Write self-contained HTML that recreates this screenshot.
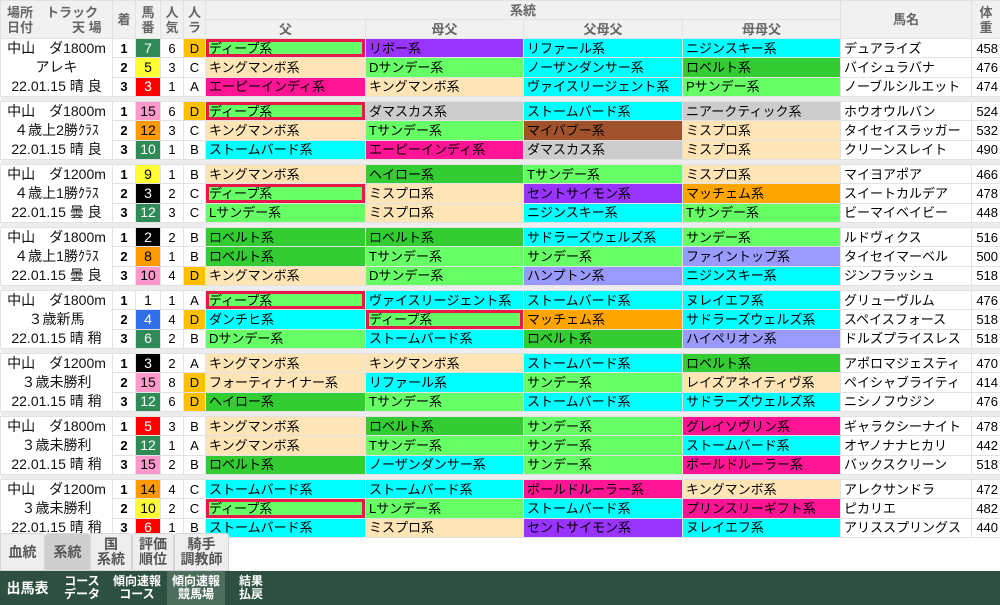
<!DOCTYPE html>
<html><head><meta charset="utf-8"><style>
*{margin:0;padding:0;box-sizing:border-box}
body{width:1000px;height:605px;overflow:hidden;background:#fff;font-family:"Liberation Sans","Noto Sans CJK JP",sans-serif;position:relative}
table{position:absolute;left:0;top:0;width:1000px;border-collapse:collapse;table-layout:fixed}
td,th{border:1px solid #e2e2e2;font-size:13px;white-space:nowrap;overflow:hidden;height:19px;line-height:17px;padding:0}
th{background:#f1f1f1;color:#666;font-weight:bold;font-size:13px;line-height:15px}
td.v{text-align:center;font-size:14px;line-height:19px;vertical-align:middle;color:#111}
td.a{text-align:center;font-weight:bold}
td.n{text-align:center;font-size:14px}
td.k{text-align:center}
td.D{background:#ffc000}
td.t{padding-left:3px}
td.w{text-align:right;padding-right:2px}
.g{background:#66ff66}.p{background:#ffe4b5}.c{background:#00ffff}.d{background:#33cc33}.m{background:#ff1493}.u{background:#9933ff}.s{background:#cccccc}.b{background:#a0522d}.o{background:#ffa500}.l{background:#9999ff}
.r{box-shadow:inset 0 0 0 3px #e8194a}
.f1{background:#fff}.f2{background:#000;color:#fff}.f3{background:#ff0000;color:#fff}.f4{background:#2f6fe8;color:#fff}.f5{background:#ffff33}.f6{background:#2e8b57;color:#fff}.f7{background:#ff9900}.f8{background:#ff99cc}
tr.gap td{height:5px;background:#ededed;border:none}
.tabs{position:absolute;left:0;top:533px;height:38px;display:flex}
.tab{height:38px;border:1px solid #d5d5d5;background:#eeeeee;color:#555;font-weight:bold;font-size:14px;display:flex;align-items:center;justify-content:center;text-align:center;line-height:15px;border-radius:3px 3px 0 0}
.bar{position:absolute;left:0;top:571px;width:1000px;height:34px;background:#2e5040;color:#fff;font-weight:bold}
.bi{position:absolute;top:0;height:34px;display:flex;align-items:center;justify-content:center;text-align:center;font-size:12px;line-height:13px}
</style></head><body>
<table>
<colgroup><col style="width:112px"><col style="width:23px"><col style="width:25px"><col style="width:23px"><col style="width:22px"><col style="width:160px"><col style="width:158px"><col style="width:159px"><col style="width:158px"><col style="width:131px"><col style="width:29px"></colgroup>
<tr><th rowspan="2" style="height:38px;text-align:left;padding-left:6px">場所　トラック<br>日付　　　天 場</th><th rowspan="2">着</th><th rowspan="2">馬<br>番</th><th rowspan="2">人<br>気</th><th rowspan="2">人<br>ラ</th><th colspan="4">系統</th><th rowspan="2">馬名</th><th rowspan="2">体<br>重</th></tr>
<tr><th>父</th><th>母父</th><th>父母父</th><th>母母父</th></tr>

<tr><td class="v" rowspan="3">中山　ダ1800m<br>アレキ<br>22.01.15 晴 良</td><td class="a">1</td><td class="n f6">7</td><td class="k">6</td><td class="k D">D</td><td class="t g r">ディープ系</td><td class="t u">リボー系</td><td class="t c">リファール系</td><td class="t c">ニジンスキー系</td><td class="t">デュアライズ</td><td class="w">458</td></tr>
<tr><td class="a">2</td><td class="n f5">5</td><td class="k">3</td><td class="k">C</td><td class="t p">キングマンボ系</td><td class="t g">Dサンデー系</td><td class="t c">ノーザンダンサー系</td><td class="t d">ロベルト系</td><td class="t">バイシュラバナ</td><td class="w">476</td></tr>
<tr><td class="a">3</td><td class="n f3">3</td><td class="k">1</td><td class="k">A</td><td class="t m">エーピーインディ系</td><td class="t p">キングマンボ系</td><td class="t c">ヴァイスリージェント系</td><td class="t g">Pサンデー系</td><td class="t">ノーブルシルエット</td><td class="w">474</td></tr>
<tr class="gap"><td colspan="11"></td></tr>

<tr><td class="v" rowspan="3">中山　ダ1800m<br>４歳上2勝ｸﾗｽ<br>22.01.15 晴 良</td><td class="a">1</td><td class="n f8">15</td><td class="k">6</td><td class="k D">D</td><td class="t g r">ディープ系</td><td class="t s">ダマスカス系</td><td class="t c">ストームバード系</td><td class="t s">ニアークティック系</td><td class="t">ホウオウルバン</td><td class="w">524</td></tr>
<tr><td class="a">2</td><td class="n f7">12</td><td class="k">3</td><td class="k">C</td><td class="t p">キングマンボ系</td><td class="t g">Tサンデー系</td><td class="t b">マイバブー系</td><td class="t p">ミスプロ系</td><td class="t">タイセイスラッガー</td><td class="w">532</td></tr>
<tr><td class="a">3</td><td class="n f6">10</td><td class="k">1</td><td class="k">B</td><td class="t c">ストームバード系</td><td class="t m">エーピーインディ系</td><td class="t s">ダマスカス系</td><td class="t p">ミスプロ系</td><td class="t">クリーンスレイト</td><td class="w">490</td></tr>
<tr class="gap"><td colspan="11"></td></tr>

<tr><td class="v" rowspan="3">中山　ダ1200m<br>４歳上1勝ｸﾗｽ<br>22.01.15 曇 良</td><td class="a">1</td><td class="n f5">9</td><td class="k">1</td><td class="k">B</td><td class="t p">キングマンボ系</td><td class="t d">ヘイロー系</td><td class="t g">Tサンデー系</td><td class="t p">ミスプロ系</td><td class="t">マイヨアポア</td><td class="w">466</td></tr>
<tr><td class="a">2</td><td class="n f2">3</td><td class="k">2</td><td class="k">C</td><td class="t g r">ディープ系</td><td class="t p">ミスプロ系</td><td class="t u">セントサイモン系</td><td class="t o">マッチェム系</td><td class="t">スイートカルデア</td><td class="w">478</td></tr>
<tr><td class="a">3</td><td class="n f6">12</td><td class="k">3</td><td class="k">C</td><td class="t g">Lサンデー系</td><td class="t p">ミスプロ系</td><td class="t c">ニジンスキー系</td><td class="t g">Tサンデー系</td><td class="t">ビーマイベイビー</td><td class="w">448</td></tr>
<tr class="gap"><td colspan="11"></td></tr>

<tr><td class="v" rowspan="3">中山　ダ1800m<br>４歳上1勝ｸﾗｽ<br>22.01.15 曇 良</td><td class="a">1</td><td class="n f2">2</td><td class="k">2</td><td class="k">B</td><td class="t d">ロベルト系</td><td class="t d">ロベルト系</td><td class="t c">サドラーズウェルズ系</td><td class="t g">サンデー系</td><td class="t">ルドヴィクス</td><td class="w">516</td></tr>
<tr><td class="a">2</td><td class="n f7">8</td><td class="k">1</td><td class="k">B</td><td class="t d">ロベルト系</td><td class="t g">Tサンデー系</td><td class="t g">サンデー系</td><td class="t l">ファイントップ系</td><td class="t">タイセイマーベル</td><td class="w">500</td></tr>
<tr><td class="a">3</td><td class="n f8">10</td><td class="k">4</td><td class="k D">D</td><td class="t p">キングマンボ系</td><td class="t g">Dサンデー系</td><td class="t l">ハンプトン系</td><td class="t c">ニジンスキー系</td><td class="t">ジンフラッシュ</td><td class="w">518</td></tr>
<tr class="gap"><td colspan="11"></td></tr>

<tr><td class="v" rowspan="3">中山　ダ1800m<br>３歳新馬<br>22.01.15 晴 稍</td><td class="a">1</td><td class="n f1">1</td><td class="k">1</td><td class="k">A</td><td class="t g r">ディープ系</td><td class="t c">ヴァイスリージェント系</td><td class="t c">ストームバード系</td><td class="t c">ヌレイエフ系</td><td class="t">グリューヴルム</td><td class="w">476</td></tr>
<tr><td class="a">2</td><td class="n f4">4</td><td class="k">4</td><td class="k D">D</td><td class="t c">ダンチヒ系</td><td class="t g r">ディープ系</td><td class="t o">マッチェム系</td><td class="t c">サドラーズウェルズ系</td><td class="t">スペイスフォース</td><td class="w">518</td></tr>
<tr><td class="a">3</td><td class="n f6">6</td><td class="k">2</td><td class="k">B</td><td class="t g">Dサンデー系</td><td class="t c">ストームバード系</td><td class="t d">ロベルト系</td><td class="t l">ハイペリオン系</td><td class="t">ドルズプライスレス</td><td class="w">518</td></tr>
<tr class="gap"><td colspan="11"></td></tr>

<tr><td class="v" rowspan="3">中山　ダ1200m<br>３歳未勝利<br>22.01.15 晴 稍</td><td class="a">1</td><td class="n f2">3</td><td class="k">2</td><td class="k">A</td><td class="t p">キングマンボ系</td><td class="t p">キングマンボ系</td><td class="t c">ストームバード系</td><td class="t d">ロベルト系</td><td class="t">アポロマジェスティ</td><td class="w">470</td></tr>
<tr><td class="a">2</td><td class="n f8">15</td><td class="k">8</td><td class="k D">D</td><td class="t p">フォーティナイナー系</td><td class="t c">リファール系</td><td class="t g">サンデー系</td><td class="t p">レイズアネイティヴ系</td><td class="t">ペイシャブライティ</td><td class="w">414</td></tr>
<tr><td class="a">3</td><td class="n f6">12</td><td class="k">6</td><td class="k D">D</td><td class="t d">ヘイロー系</td><td class="t g">Tサンデー系</td><td class="t c">ストームバード系</td><td class="t c">サドラーズウェルズ系</td><td class="t">ニシノフウジン</td><td class="w">476</td></tr>
<tr class="gap"><td colspan="11"></td></tr>

<tr><td class="v" rowspan="3">中山　ダ1800m<br>３歳未勝利<br>22.01.15 晴 稍</td><td class="a">1</td><td class="n f3">5</td><td class="k">3</td><td class="k">B</td><td class="t p">キングマンボ系</td><td class="t d">ロベルト系</td><td class="t g">サンデー系</td><td class="t m">グレイソヴリン系</td><td class="t">ギャラクシーナイト</td><td class="w">478</td></tr>
<tr><td class="a">2</td><td class="n f6">12</td><td class="k">1</td><td class="k">A</td><td class="t p">キングマンボ系</td><td class="t g">Tサンデー系</td><td class="t g">サンデー系</td><td class="t c">ストームバード系</td><td class="t">オヤノナナヒカリ</td><td class="w">442</td></tr>
<tr><td class="a">3</td><td class="n f8">15</td><td class="k">2</td><td class="k">B</td><td class="t d">ロベルト系</td><td class="t c">ノーザンダンサー系</td><td class="t g">サンデー系</td><td class="t m">ボールドルーラー系</td><td class="t">バックスクリーン</td><td class="w">518</td></tr>
<tr class="gap"><td colspan="11"></td></tr>

<tr><td class="v" rowspan="3">中山　ダ1200m<br>３歳未勝利<br>22.01.15 晴 稍</td><td class="a">1</td><td class="n f7">14</td><td class="k">4</td><td class="k">C</td><td class="t c">ストームバード系</td><td class="t c">ストームバード系</td><td class="t m">ボールドルーラー系</td><td class="t p">キングマンボ系</td><td class="t">アレクサンドラ</td><td class="w">472</td></tr>
<tr><td class="a">2</td><td class="n f5">10</td><td class="k">2</td><td class="k">C</td><td class="t g r">ディープ系</td><td class="t g">Lサンデー系</td><td class="t c">ストームバード系</td><td class="t m">プリンスリーギフト系</td><td class="t">ピカリエ</td><td class="w">482</td></tr>
<tr><td class="a">3</td><td class="n f3">6</td><td class="k">1</td><td class="k">B</td><td class="t c">ストームバード系</td><td class="t p">ミスプロ系</td><td class="t u">セントサイモン系</td><td class="t c">ヌレイエフ系</td><td class="t">アリススプリングス</td><td class="w">440</td></tr>
</table>

<div class="tabs">
<div class="tab" style="width:45px">血統</div>
<div class="tab" style="width:45px;background:#cfcfcf">系統</div>
<div class="tab" style="width:42px">国<br>系統</div>
<div class="tab" style="width:42px">評価<br>順位</div>
<div class="tab" style="width:55px">騎手<br>調教師</div>
</div>
<div class="bar">
<div class="bi" style="left:0;width:55px;font-size:14px">出馬表</div>
<div class="bi" style="left:58px;width:48px">コース<br>データ</div>
<div class="bi" style="left:110px;width:54px">傾向速報<br>コース</div>
<div class="bi" style="left:167px;width:58px;background:#4d6d5d">傾向速報<br>競馬場</div>
<div class="bi" style="left:230px;width:42px">結果<br>払戻</div>
</div>
</body></html>
